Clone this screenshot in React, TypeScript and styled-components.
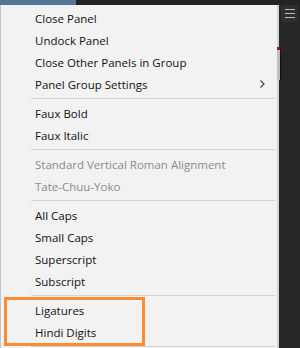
import React from "react";
import styled, { createGlobalStyle } from "styled-components";

const GlobalStyle = createGlobalStyle`
    html, body {
        margin: 0;
        padding: 0;
        background: #262626;
    }
`;

const Screen = styled.div`
    width: 300px;
    height: 348px;
    position: relative;
    overflow: hidden;
    background: #262626;
    display: flex;
    flex-direction: column;
    font-family: "Open Sans", "Noto Sans", sans-serif;
`;

const TopStrip = styled.div`
    height: 5px;
    flex: none;
    display: flex;
    background: #232323;
`;

const TabAccent = styled.div`
    width: 76px;
    background: #557797;
`;

const Body = styled.div`
    flex: 1;
    display: flex;
    min-height: 0;
`;

const Menu = styled.div`
    width: 276px;
    flex: none;
    background: #f2f2f2;
    border-left: 1px solid #c4c4c4;
    border-right: 2px solid #d2d2d2;
    padding-top: 2px;
    display: flex;
    flex-direction: column;
`;

const Item = styled.div<{ disabled?: boolean }>`
    height: 22px;
    flex: none;
    display: flex;
    align-items: center;
    justify-content: space-between;
    padding: 0 12px 0 34px;
    font-size: 11.5px;
    color: ${({ disabled }) => (disabled ? "#8b8b8b" : "#111111")};
    white-space: nowrap;
`;

const Separator = styled.div`
    height: 7px;
    flex: none;
    display: flex;
    align-items: center;
    padding: 0 2px 0 30px;

    &::after {
        content: "";
        flex: 1;
        height: 1px;
        background: #d4d4d4;
    }
`;

const Chevron = () => (
    <svg width="5" height="8" viewBox="0 0 5 8">
        <polyline points="0.5,0.5 4,4 0.5,7.5" fill="none" stroke="#454545" strokeWidth="1.2" />
    </svg>
);

const Rail = styled.div`
    flex: 1;
    display: flex;
    flex-direction: column;
    align-items: center;
`;

const MenuButton = styled.div`
    width: 17px;
    height: 17px;
    border-radius: 2px;
    background: #2f2f2f;
    display: flex;
    flex-direction: column;
    justify-content: center;
    align-items: center;
    gap: 3px;

    span {
        width: 10px;
        height: 1px;
        background: #bdbdbd;
    }
`;

const ScrollThumb = styled.div`
    position: absolute;
    left: 277px;
    top: 47px;
    width: 3px;
    height: 30px;
    background: #bdbdbd;
    border-top: 3px solid #a01515;
    border-right: 1px solid #111;
`;

const Highlight = styled.div`
    position: absolute;
    left: 4px;
    top: 297px;
    width: 141px;
    height: 49px;
    box-sizing: border-box;
    border: 3px solid #fd8a2e;
    pointer-events: none;
`;

type Entry = { label: string; disabled?: boolean; submenu?: boolean } | "sep";

const entries: Entry[] = [
    { label: "Close Panel" },
    { label: "Undock Panel" },
    { label: "Close Other Panels in Group" },
    { label: "Panel Group Settings", submenu: true },
    "sep",
    { label: "Faux Bold" },
    { label: "Faux Italic" },
    "sep",
    { label: "Standard Vertical Roman Alignment", disabled: true },
    { label: "Tate-Chuu-Yoko", disabled: true },
    "sep",
    { label: "All Caps" },
    { label: "Small Caps" },
    { label: "Superscript" },
    { label: "Subscript" },
    "sep",
    { label: "Ligatures" },
    { label: "Hindi Digits" },
    "sep",
];

const App = () => {
    return (
        <>
            <GlobalStyle />
            <Screen>
                <TopStrip>
                    <TabAccent />
                </TopStrip>
                <Body>
                    <Menu>
                        {entries.map((e, i) =>
                            e === "sep" ? (
                                <Separator key={i} />
                            ) : (
                                <Item key={i} disabled={e.disabled}>
                                    <span>{e.label}</span>
                                    {e.submenu && <Chevron />}
                                </Item>
                            )
                        )}
                    </Menu>
                    <Rail>
                        <MenuButton>
                            <span />
                            <span />
                            <span />
                        </MenuButton>
                    </Rail>
                </Body>
                <ScrollThumb />
                <Highlight />
            </Screen>
        </>
    );
};

export default App;
